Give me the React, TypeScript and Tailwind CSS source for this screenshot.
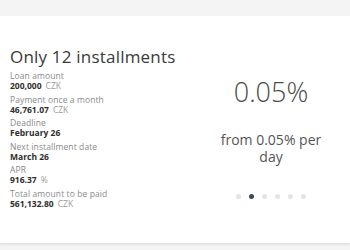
import React from "react";

const items = [
  { label: "Loan amount", value: "200,000", unit: "CZK" },
  { label: "Payment once a month", value: "46,761.07", unit: "CZK" },
  { label: "Deadline", value: "February 26", unit: "" },
  { label: "Next installment date", value: "March 26", unit: "" },
  { label: "APR", value: "916.37", unit: "%" },
  { label: "Total amount to be paid", value: "561,132.80", unit: "CZK" },
];

export default function App() {
  return (
    <div
      className="w-[350px] h-[250px] bg-[#f4f4f4] pt-[16px] overflow-hidden"
      style={{ fontFamily: '"Open Sans", "DejaVu Sans", sans-serif' }}
    >
      <div className="bg-white h-[228px] flex border-b border-[#e2e2e2] shadow-[0_1px_2px_rgba(0,0,0,0.08)]">
        <div className="w-[192px] pl-[10px] pt-[30px]">
          <div className="text-[17px] leading-[22px] text-[#3a3a3a] whitespace-nowrap tracking-[0.2px]">Only 12 installments</div>
          <div className="mt-[3px] flex flex-col gap-[3.5px]">
            {items.map((it) => (
              <div key={it.label} className="flex flex-col">
                <div className="text-[8.5px] leading-[10px] text-[#8a8a8a] tracking-[0.1px]">{it.label}</div>
                <div className="text-[8.5px] leading-[10px] font-bold text-[#2e2e2e]">
                  {it.value}
                  {it.unit && <span className="font-normal text-[#9a9a9a] ml-[4px]">{it.unit}</span>}
                </div>
              </div>
            ))}
          </div>
        </div>
        <div className="flex-1 flex flex-col items-center pt-[61px]">
          <div className="text-[27px] leading-[30px] font-light text-[#4a4a4a]">0.05%</div>
          <div className="mt-[24px] text-[14px] leading-[17px] text-[#555] text-center w-[110px]">from 0.05% per day</div>
          <div className="mt-[29px] flex gap-[8px]">
            {[0, 1, 2, 3, 4, 5].map((i) => (
              <div
                key={i}
                className={i === 1 ? "w-[5px] h-[5px] rounded-full bg-[#3d4a5a]" : "w-[5px] h-[5px] rounded-full bg-[#e4e4e4]"}
              />
            ))}
          </div>
        </div>
      </div>
    </div>
  );
}
